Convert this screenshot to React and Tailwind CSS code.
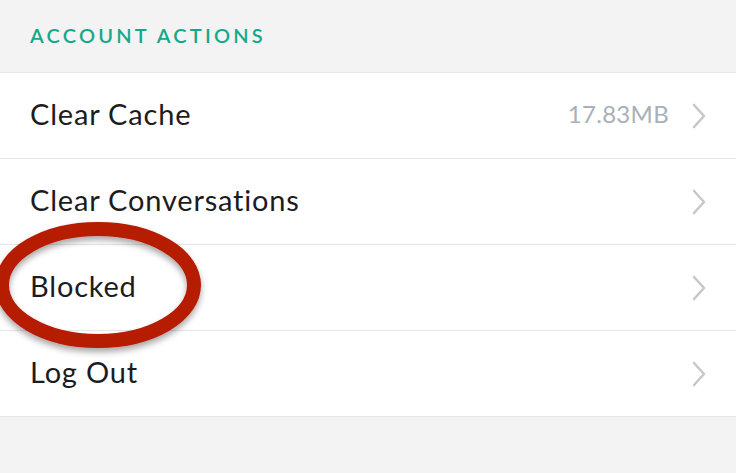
import React from "react";

const Chevron = () => (
  <svg width="16" height="26" viewBox="0 0 16 26" className="shrink-0">
    <path d="M3 2 L13 13 L3 24" fill="none" stroke="#c7c7cc" strokeWidth="2.6" strokeLinecap="round" strokeLinejoin="round" />
  </svg>
);

const Row = ({ label, value }) => (
  <div className="flex h-[86px] items-center justify-between border-b border-[#e6e6e6] bg-white pl-[30px] pr-[29px]">
    <span className="pb-[4px] text-[29px] tracking-[0.8px] text-[#1c1c1e]">{label}</span>
    <div className="flex items-center gap-[22px]">
      {value && <span className="pb-[3px] text-[24px] tracking-[0.3px] text-[#a8b0b8]">{value}</span>}
      <Chevron />
    </div>
  </div>
);

export default function App() {
  return (
    <div className="relative h-[473px] w-[736px] overflow-hidden bg-[#f3f3f3] font-['Lato','Noto_Sans',sans-serif]">
      <div className="flex h-[72px] items-center pl-[30px] pb-[3px]">
        <span className="text-[20px] font-semibold tracking-[3.2px] text-[#14a98a]">ACCOUNT ACTIONS</span>
      </div>
      <div className="border-t border-[#e8e8e8]">
        <Row label="Clear Cache" value="17.83MB" />
        <Row label="Clear Conversations" />
        <Row label="Blocked" />
        <Row label="Log Out" />
      </div>
      <svg className="absolute left-0 top-0" width="736" height="473" viewBox="0 0 736 473">
        <defs>
          <filter id="sh" x="-20%" y="-20%" width="140%" height="150%">
            <feDropShadow dx="0" dy="4" stdDeviation="3" floodColor="#000" floodOpacity="0.35" />
          </filter>
        </defs>
        <ellipse cx="98" cy="285" rx="96" ry="56" fill="none" stroke="#b51b06" strokeWidth="14" filter="url(#sh)" />
      </svg>
    </div>
  );
}
